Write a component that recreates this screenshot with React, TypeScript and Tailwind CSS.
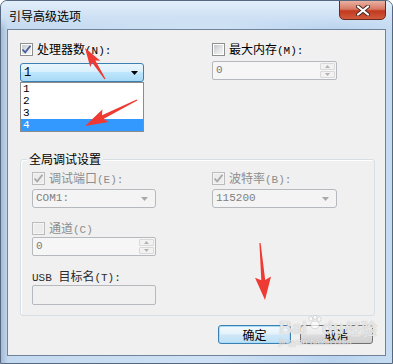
import React from 'react';

const cjk = "font-['Noto_Sans_CJK_SC','Noto_Sans',sans-serif]";
const mono = "font-['Liberation_Mono','DejaVu_Sans_Mono',monospace] text-[11px]";

function Check({ checked = false, disabled = false }: { checked?: boolean; disabled?: boolean }) {
  return (
    <span
      className={`relative flex h-[13px] w-[13px] shrink-0 items-center justify-center border ${
        disabled ? 'border-[#bcbcbc] bg-[#f4f4f4]' : 'border-[#8e8f8f] bg-white'
      }`}
    >
      <span
        className={`absolute inset-[1px] ${
          disabled
            ? 'bg-[#ececec]'
            : 'bg-[linear-gradient(135deg,#c2c6cc_0%,#e6e7e8_60%,#f4f4f4_100%)]'
        }`}
      />
      {checked && (
        <svg className="relative" width="11" height="11" viewBox="0 0 11 11">
          <path
            d="M1.5 5.5 L4.2 8.3 L9.5 1.8"
            fill="none"
            stroke={disabled ? '#a8a8a8' : '#4a5f97'}
            strokeWidth="1.8"
          />
        </svg>
      )}
    </span>
  );
}

function Label({ zh, key_, disabled = false }: { zh: string; key_: string; disabled?: boolean }) {
  return (
    <span className={`ml-[4px] leading-[13px] ${disabled ? 'text-[#8d8d8d]' : 'text-black'}`}>
      {zh}
      <span className={mono}>{key_}</span>
    </span>
  );
}

function Spinner({ value }: { value: string }) {
  return (
    <div className="flex h-[19px] w-full items-stretch rounded-[2px] border border-[#b5b8bc] bg-[#f6f6f6]">
      <span className={`${mono} flex flex-1 items-center pl-[3px] text-[#7a7a7a]`}>{value}</span>
      <div className="my-[1px] mr-[1px] flex w-[15px] flex-col gap-[1px]">
        {[0, 1].map((i) => (
          <div
            key={i}
            className="flex flex-1 items-center justify-center rounded-[1px] border border-[#d9d9d9] bg-[#f2f2f2]"
          >
            <svg width="5" height="3" viewBox="0 0 5 3">
              <path d={i === 0 ? 'M0 3 L2.5 0 L5 3Z' : 'M0 0 L2.5 3 L5 0Z'} fill="#b3b3b3" />
            </svg>
          </div>
        ))}
      </div>
    </div>
  );
}

function GrayCombo({ value }: { value: string }) {
  return (
    <div className="flex h-[19px] w-full items-center rounded-[3px] border border-[#b5b8bc] bg-[#f4f4f4] pl-[3px] pr-[7px]">
      <span className={`${mono} flex-1 text-[#7f7f7f]`}>{value}</span>
      <svg width="7" height="4" viewBox="0 0 7 4">
        <path d="M0 0 L7 0 L3.5 4Z" fill="#a9a9a9" />
      </svg>
    </div>
  );
}

function arrow(x1: number, y1: number, x2: number, y2: number, hl: number, hw: number, sw: number) {
  const dx = x2 - x1;
  const dy = y2 - y1;
  const L = Math.hypot(dx, dy);
  const ux = dx / L;
  const uy = dy / L;
  const nx = -uy;
  const ny = ux;
  const bx = x2 - ux * hl;
  const by = y2 - uy * hl;
  const p = (x: number, y: number) => `${x.toFixed(1)},${y.toFixed(1)}`;
  return [
    p(x1 + nx * 0.6, y1 + ny * 0.6),
    p(bx + (nx * sw) / 2, by + (ny * sw) / 2),
    p(bx + (nx * hw) / 2 - ux * 3, by + (ny * hw) / 2 - uy * 3),
    p(x2, y2),
    p(bx - (nx * hw) / 2 - ux * 3, by - (ny * hw) / 2 - uy * 3),
    p(bx - (nx * sw) / 2, by - (ny * sw) / 2),
    p(x1 - nx * 0.6, y1 - ny * 0.6),
  ].join(' ');
}

export default function App() {
  return (
    <div
      className={`${cjk} relative h-[364px] w-[393px] overflow-hidden rounded-t-[7px] border border-[#56687f] bg-[linear-gradient(to_right,#a3bbd5_0px,#c3d9ef_7px,#cfe2f5_55%,#b9d3ee_85%,#c6dcf2_100%)] text-[12px] text-black`}
    >
      {/* title bar */}
      <div className="flex h-[28px] items-start bg-[linear-gradient(to_bottom,#e3eefa_0%,#cde0f4_60%,transparent_100%)]">
        <span className="ml-[8px] mt-[8px] leading-[13px]">引导高级选项</span>
        <div className="ml-auto mr-[6px] mt-[-1px] flex h-[20px] w-[47px] items-center justify-center rounded-b-[5px] border border-[#6b2a20] bg-[linear-gradient(to_bottom,#eab1a2_0%,#d77a64_45%,#c2391f_55%,#d15a3c_100%)]">
          <svg width="14" height="11" viewBox="0 0 14 11">
            <path d="M2 1.5 L12 9.5 M12 1.5 L2 9.5" stroke="#4a2a26" strokeWidth="4" strokeLinecap="round" />
            <path d="M2 1.5 L12 9.5 M12 1.5 L2 9.5" stroke="#ffffff" strokeWidth="2.2" strokeLinecap="round" />
          </svg>
        </div>
      </div>

      {/* client area */}
      <div className="mx-[6px] h-[327px] border border-[#71839a] bg-[#f0f0f0] pl-[12px] pr-[10px] pt-[13px]">
        <div className="flex">
          <div className="w-[124px]">
            <div className="flex h-[13px] items-center">
              <Check checked />
              <Label zh="处理器数" key_="(N):" />
            </div>
            <div className="relative mt-[7px] flex h-[19px] items-center rounded-[3px] border border-[#3c7fb1] bg-[linear-gradient(to_bottom,#eaf6fd_0%,#d9f0fc_45%,#bee6fd_50%,#a7d9f5_100%)] pl-[3px] pr-[5px]">
              <span className={`${mono} flex-1 text-[12px]`}>1</span>
              <svg width="7" height="4" viewBox="0 0 7 4">
                <path d="M0 0 L7 0 L3.5 4Z" fill="#000" />
              </svg>
              <div className="absolute left-[-1px] right-[-1px] top-[18px] border border-[#8c8c8c] bg-white">
                {['1', '2', '3', '4'].map((n) => (
                  <div
                    key={n}
                    className={`flex h-[12px] items-center overflow-hidden pl-[2px] font-['Liberation_Mono',monospace] text-[11px] leading-[11px] ${
                      n === '4' ? 'bg-[#3399ff] text-white' : 'text-black'
                    }`}
                  >
                    {n}
                  </div>
                ))}
              </div>
            </div>
          </div>
          <div className="ml-[68px] w-[125px]">
            <div className="flex h-[13px] items-center">
              <Check />
              <Label zh="最大内存" key_="(M):" />
            </div>
            <div className="mt-[5px]">
              <Spinner value="0" />
            </div>
          </div>
        </div>

        {/* group box */}
        <div className="relative mt-[77px] h-[157px] w-[355px] rounded-[3px] border border-[#d5dfe5] pl-[11px] pt-[12px] shadow-[inset_1px_1px_0_#ffffff]">
          <span className="absolute left-[6px] top-[-8px] bg-[#f0f0f0] px-[2px] leading-[13px]">全局调试设置</span>
          <div className="flex">
            <div className="w-[124px]">
              <div className="flex h-[13px] items-center">
                <Check checked disabled />
                <Label zh="调试端口" key_="(E):" disabled />
              </div>
              <div className="mt-[4px]">
                <GrayCombo value="COM1:" />
              </div>
            </div>
            <div className="ml-[56px] w-[125px]">
              <div className="flex h-[13px] items-center">
                <Check checked disabled />
                <Label zh="波特率" key_="(B):" disabled />
              </div>
              <div className="mt-[4px]">
                <GrayCombo value="115200" />
              </div>
            </div>
          </div>
          <div className="mt-[14px] flex h-[13px] items-center">
            <Check disabled />
            <Label zh="通道" key_="(C)" disabled />
          </div>
          <div className="mt-[2px] w-[124px]">
            <Spinner value="0" />
          </div>
          <div className="mt-[13px] h-[13px] leading-[13px] text-[#2b2b2b]">
            <span className={mono}>USB </span>目标名<span className={mono}>(T):</span>
          </div>
          <div className="mt-[3px] h-[20px] w-[124px] rounded-[2px] border border-[#b5b8bc] bg-[#f0f0f0]" />
        </div>

        {/* buttons */}
        <div className="mr-[2px] mt-[9px] flex justify-end gap-[9px]">
          <button className="flex h-[19px] w-[73px] items-center justify-center rounded-[3px] border border-[#3c7fb1] bg-[linear-gradient(to_bottom,#f4fafe_0%,#e3f1fb_48%,#cfe7f7_52%,#bde0f5_100%)] leading-[13px] shadow-[inset_0_0_0_1px_#a9dcf6]">
            确定
          </button>
          <button className="flex h-[19px] w-[73px] items-center justify-center rounded-[3px] border border-[#707070] bg-[linear-gradient(to_bottom,#f2f2f2_0%,#ebebeb_48%,#dddddd_52%,#cfcfcf_100%)] leading-[13px]">
            取消
          </button>
        </div>
      </div>

      {/* baidu watermark */}
      <div className="pointer-events-none absolute left-[278px] top-[314px] text-white/70 [text-shadow:0_0_1px_#a8a8a8]">
        <div className="flex items-end">
          <span className="font-['Liberation_Sans',sans-serif] text-[18px] font-bold leading-[18px]">Bai</span>
          <svg width="15" height="15" viewBox="0 0 16 16" className="mb-[7px] opacity-70">
            <g fill="#ffffff" stroke="#b0b0b0" strokeWidth="0.6">
              <ellipse cx="4" cy="4" rx="2" ry="2.5" />
              <ellipse cx="8.5" cy="2.5" rx="2" ry="2.3" />
              <ellipse cx="13" cy="4.5" rx="2" ry="2.5" />
              <ellipse cx="8.5" cy="10.5" rx="4.5" ry="4" />
            </g>
          </svg>
          <span className="font-['Liberation_Sans',sans-serif] text-[18px] font-bold leading-[18px]">du</span>
          <span className="ml-[1px] text-[16px] font-bold leading-[18px]">经验</span>
        </div>
        <div className="font-['Liberation_Sans',sans-serif] text-[9px] leading-[10px]">jingyan.baidu.com</div>
      </div>

      {/* red arrows */}
      <svg className="pointer-events-none absolute left-0 top-0" width="393" height="364" viewBox="0 0 393 364">
        <g fill="#ef3a33">
          <polygon points={arrow(104, 78, 84, 47, 16, 12, 4)} />
          <polygon points={arrow(136, 99, 84, 125, 20, 14, 4)} />
          <polygon points={arrow(259, 242, 264, 299, 20, 16, 4)} />
        </g>
      </svg>
    </div>
  );
}
